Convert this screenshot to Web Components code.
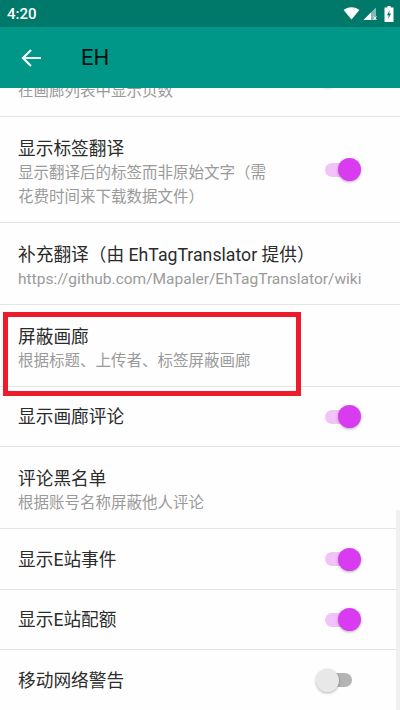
<!DOCTYPE html>
<html lang="zh-CN">

<head>
    <meta charset="UTF-8">
    <meta name="viewport" content="width=device-width, initial-scale=1.0">
    <style>
        html, body {
            margin: 0;
            height: 100%;
            overflow: hidden;
            background: #fefefe;
        }
    </style>
</head>

<body>
    <template id="status-bar-template">
        <style>
            :host {
                display: flex;
                align-items: center;
                justify-content: space-between;
                height: 27px;
                padding: 0 6px 0 7px;
                background: #00796b;
                color: #fff;
                font: 500 15px Roboto, sans-serif;
            }

            .icons {
                display: flex;
                align-items: center;
            }

            svg {
                display: block;
            }
        </style>
        <span>4:20</span>
        <div class="icons">
            <svg width="17" height="13" viewBox="0 0 18 14">
                <path d="M9 13.500L.5 3.200C2.600 1.400 5.600.2 9 .2s6.400 1.200 8.500 3z" fill="#fff" />
            </svg>
            <svg width="15" height="14" viewBox="0 0 15 14" style="margin-left:3px">
                <path d="M13 .5V13H.5z" fill="#fff" opacity=".5" />
                <path d="M8 5.500V13H.5z" fill="#fff" />
                <path d="M10.500 9.500l3 3.500m0-3.500l-3 3.500" stroke="#fff" stroke-width="1" />
            </svg>
            <svg width="10" height="16" viewBox="0 0 10 16" style="margin-left:6px">
                <path d="M3.300 0h3.400v1.600H9.500V16H.5V1.600h2.800z" fill="#fff" />
                <path d="M5.600 4L3 9.300h1.700L4.200 13l2.800-5.500H5.200z" fill="#00796b" />
            </svg>
        </div>
    </template>

    <template id="app-bar-template">
        <style>
            :host {
                display: flex;
                align-items: center;
                height: 61px;
                background: #009688;
                font: 400 22px Roboto, sans-serif;
                color: #02130f;
            }

            svg {
                display: block;
                margin-left: 21px;
                margin-right: 40px;
            }
        </style>
        <svg width="20" height="18" viewBox="0 0 20 18" fill="none" stroke="#f4fbfa" stroke-width="2.200">
            <path d="M20 9H2M10 1L2 9l8 8" />
        </svg>
        <slot></slot>
    </template>

    <template id="pref-switch-template">
        <style>
            :host {
                display: block;
                position: relative;
                flex: none;
                width: 44px;
                height: 24px;
                margin-right: 40px;
            }

            .track {
                position: absolute;
                left: 9px;
                top: 5px;
                width: 27px;
                height: 14px;
                border-radius: 7px;
                background: #b4b4b4;
            }

            .knob {
                position: absolute;
                left: 0;
                top: .5px;
                width: 23px;
                height: 23px;
                border-radius: 50%;
                background: #e8e8e8;
                box-shadow: 0 1px 3px rgba(0, 0, 0, .3);
            }

            :host([on]) .track {
                background: #f2c3f8;
            }

            :host([on]) .knob {
                left: 22px;
                background: #d93cf0;
            }
        </style>
        <div class="track"></div>
        <div class="knob"></div>
    </template>

    <template id="pref-row-template">
        <style>
            :host {
                display: flex;
                align-items: center;
                box-sizing: border-box;
                padding-left: 18px;
                border-bottom: 1px solid #e4e4e4;
                font-family: Roboto, "Noto Sans CJK SC", sans-serif;
            }

            .text {
                flex: 1;
                min-width: 0;
                padding: 20px 0 13px;
            }

            :host([single]) .text {
                padding: 19px 0 17px;
            }

            :host([tight]) .text {
                padding: 18px 0 17px;
            }

            :host([switch]) .text {
                padding-right: 36px;
            }

            .title {
                min-height: 24px;
                font-size: 17.700px;
                line-height: 24px;
                color: #2b2b2b;
            }

            .summary {
                font-size: 15.500px;
                line-height: 24px;
                color: #9a9a9a;
            }

            :host([single]) .summary {
                display: none;
            }
        </style>
        <div class="text">
            <div class="title"><slot name="title"></slot></div>
            <div class="summary"><slot name="summary"></slot></div>
        </div>
        <slot name="action"></slot>
    </template>

    <template id="pref-list-template">
        <style>
            :host {
                display: block;
                position: relative;
                flex: 1;
                min-height: 0;
                overflow: hidden;
                background: #fefefe;
            }

            .rows {
                margin-top: -53px;
            }

            .mark {
                position: absolute;
                left: 3px;
                top: 224px;
                box-sizing: border-box;
                width: 298px;
                height: 84px;
                border: 5px solid #ec1c2a;
            }

            .scrollbar {
                position: absolute;
                right: 0;
                top: 422px;
                bottom: 0;
                width: 4px;
                background: #f0f0f0;
            }
        </style>
        <div class="rows"><slot></slot></div>
        <div class="mark"></div>
        <div class="scrollbar"></div>
    </template>

    <template id="app-shell-template">
        <style>
            :host {
                display: flex;
                flex-direction: column;
                height: 100vh;
            }
        </style>
        <slot></slot>
    </template>

    <script>
        class TemplateElement extends HTMLElement {
            constructor(templateId) {
                super();
                const shadow = this.attachShadow({ mode: 'open' });
                shadow.appendChild(document.getElementById(templateId).content.cloneNode(true));
            }
        }

        customElements.define('status-bar', class extends TemplateElement {
            constructor() { super('status-bar-template'); }
        });
        customElements.define('app-bar', class extends TemplateElement {
            constructor() { super('app-bar-template'); }
        });
        customElements.define('pref-switch', class extends TemplateElement {
            constructor() { super('pref-switch-template'); }
        });
        customElements.define('pref-row', class extends TemplateElement {
            constructor() { super('pref-row-template'); }
        });
        customElements.define('pref-list', class extends TemplateElement {
            constructor() { super('pref-list-template'); }
        });
        customElements.define('app-shell', class extends TemplateElement {
            constructor() { super('app-shell-template'); }
        });
    </script>

    <app-shell>
        <status-bar></status-bar>
        <app-bar>EH</app-bar>
        <pref-list>
            <pref-row switch>
                <span slot="summary">在画廊列表中显示页数</span>
                <pref-switch slot="action"></pref-switch>
            </pref-row>
            <pref-row switch>
                <span slot="title">显示标签翻译</span>
                <span slot="summary">显示翻译后的标签而非原始文字（需花费时间来下载数据文件）</span>
                <pref-switch slot="action" on></pref-switch>
            </pref-row>
            <pref-row>
                <span slot="title">补充翻译（由 EhTagTranslator 提供）</span>
                <span slot="summary">https://github.com/Mapaler/EhTagTranslator/wiki</span>
            </pref-row>
            <pref-row>
                <span slot="title">屏蔽画廊</span>
                <span slot="summary">根据标题、上传者、标签屏蔽画廊</span>
            </pref-row>
            <pref-row single tight switch>
                <span slot="title">显示画廊评论</span>
                <pref-switch slot="action" on></pref-switch>
            </pref-row>
            <pref-row>
                <span slot="title">评论黑名单</span>
                <span slot="summary">根据账号名称屏蔽他人评论</span>
            </pref-row>
            <pref-row single switch>
                <span slot="title">显示E站事件</span>
                <pref-switch slot="action" on></pref-switch>
            </pref-row>
            <pref-row single tight switch>
                <span slot="title">显示E站配额</span>
                <pref-switch slot="action" on></pref-switch>
            </pref-row>
            <pref-row single switch>
                <span slot="title">移动网络警告</span>
                <pref-switch slot="action"></pref-switch>
            </pref-row>
        </pref-list>
    </app-shell>
</body>

</html>
